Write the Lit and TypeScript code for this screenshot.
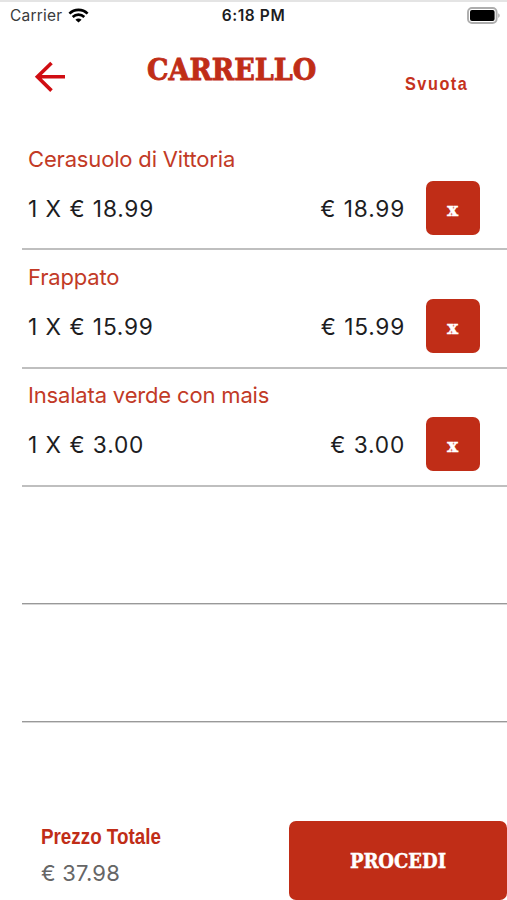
import { LitElement, html, css } from "lit";
import { customElement, property } from "lit/decorators.js";

interface CartItem {
  name: string;
  quantity: number;
  price: number;
}

const euro = (value: number) => `€ ${value.toFixed(2)}`;

@customElement("status-bar")
class StatusBar extends LitElement {
  static styles = css`
    :host {
      display: grid;
      grid-template-columns: 1fr auto 1fr;
      align-items: center;
      box-sizing: border-box;
      height: 30px;
      border-top: 2px solid #e4e4e4;
      padding: 0 7px 2px;
      font-size: 15.5px;
      color: #1c1c1e;
    }
    .left {
      display: flex;
      align-items: center;
      gap: 6px;
      margin-left: 3px;
      color: #3a3a3c;
      letter-spacing: 0.2px;
    }
    .time {
      font-weight: 600;
      letter-spacing: 0.6px;
    }
    .battery {
      justify-self: end;
    }
    svg {
      display: block;
    }
  `;

  render() {
    return html`
      <div class="left">
        <span>Carrier</span>
        <svg width="21" height="15" viewBox="0 0 21 15" fill="none" stroke="#000" stroke-width="2.6">
          <path d="M1.4 5.6C6.4 .6 14.6 .6 19.6 5.6"></path>
          <path d="M4.7 9C8 5.8 13 5.8 16.3 9"></path>
          <path d="M10.5 14.6L7.4 11.7C9.2 10.1 11.8 10.1 13.6 11.7Z" fill="#000" stroke="none"></path>
        </svg>
      </div>
      <div class="time">6:18 PM</div>
      <svg class="battery" width="33" height="17" viewBox="0 0 33 17">
        <rect x="1" y="1" width="28.6" height="15" rx="4" fill="#fff" stroke="#adadad" stroke-width="1.9"></rect>
        <rect x="3" y="3" width="24.6" height="11" rx="2" fill="#000"></rect>
        <path d="M31.2 6.2C33.2 7 33.2 10 31.2 10.8Z" fill="#adadad"></path>
      </svg>
    `;
  }
}

@customElement("cart-row")
class CartRow extends LitElement {
  @property({ attribute: false }) item?: CartItem;
  @property({ type: Boolean, reflect: true }) empty = false;

  static styles = css`
    :host {
      display: block;
      box-sizing: border-box;
      height: 118px;
      margin-left: 22px;
      padding: 13px 27px 0 6px;
      border-bottom: 2px solid #bfbfbf;
    }
    :host([empty]) {
      height: 117px;
      margin-bottom: 1px;
      border-bottom: 1px solid #999;
      box-shadow: 0 1px #d6d6d6;
    }
    .name {
      font-size: 22px;
      line-height: 28px;
      letter-spacing: -0.17px;
      color: #c23a26;
    }
    .line {
      display: flex;
      align-items: center;
      height: 54px;
      margin-top: 8px;
      font-size: 22.7px;
      line-height: 28px;
      letter-spacing: 0.78px;
      word-spacing: 0.4px;
      color: #1d1d1f;
    }
    .line span {
      padding-top: 2px;
    }
    .total {
      margin-left: auto;
      margin-right: 21px;
    }
    .remove {
      width: 54px;
      height: 54px;
      padding: 3px 1px 0 0;
      border: 0;
      border-radius: 7px;
      background: #c02d17;
      color: #fff;
      font: bold 18px "DejaVu Serif", serif;
      -webkit-text-stroke: 0.6px #fff;
    }
  `;

  render() {
    const item = this.item;
    if (!item) return null;
    return html`
      <div class="name">${item.name}</div>
      <div class="line">
        <span>${item.quantity} X ${euro(item.price)}</span>
        <span class="total">${euro(item.quantity * item.price)}</span>
        <button class="remove">x</button>
      </div>
    `;
  }
}

@customElement("app-root")
class AppRoot extends LitElement {
  static styles = css`
    :host {
      display: flex;
      flex-direction: column;
      width: 507px;
      height: 900px;
      overflow: hidden;
      background: #fff;
      font-family: Inter, "Liberation Sans", sans-serif;
    }
    header {
      display: grid;
      grid-template-columns: 147px 1fr 102px;
      height: 102px;
      flex: none;
      white-space: nowrap;
    }
    cart-row {
      flex: none;
    }
    cart-row:nth-of-type(2) {
      height: 119px;
    }
    cart-row:nth-of-type(3) {
      padding-top: 12px;
    }
    .back {
      margin: 31px 0 0 34px;
    }
    h1 {
      margin: 20px 0 0;
      font: bold 30px/40px "DejaVu Serif Condensed", "DejaVu Serif", serif;
      font-stretch: condensed;
      -webkit-text-stroke: 0.8px #c02d17;
      color: #c02d17;
    }
    .clear {
      margin-top: 42px;
      font: bold 19px/24px "Liberation Sans Narrow", "Liberation Sans", sans-serif;
      letter-spacing: 1.8px;
      color: #c5321d;
      transform: scaleX(0.855);
      transform-origin: left;
    }
    footer {
      display: flex;
      justify-content: space-between;
      margin-top: auto;
      height: 79.5px;
    }
    .sum {
      padding-left: 41px;
    }
    .label {
      margin-top: 1px;
      font: bold 22px/30px "Liberation Sans Narrow", "Liberation Sans", sans-serif;
      color: #c02d17;
      transform: scaleX(0.855);
      transform-origin: left;
    }
    .amount {
      margin-top: 7px;
      font-size: 22px;
      line-height: 28px;
      letter-spacing: 0.2px;
      color: #666;
    }
    .proceed {
      width: 218px;
      height: 79.5px;
      padding: 1px 0 0;
      border: 0;
      border-radius: 7px;
      background: #c02d17;
      color: #fff;
      font: bold 20px "DejaVu Serif Condensed", "DejaVu Serif", serif;
      font-stretch: condensed;
      -webkit-text-stroke: 0.4px #fff;
    }
  `;

  private items: CartItem[] = [
    { name: "Cerasuolo di Vittoria", quantity: 1, price: 18.99 },
    { name: "Frappato", quantity: 1, price: 15.99 },
    { name: "Insalata verde con mais", quantity: 1, price: 3 },
  ];

  render() {
    const rows = [...this.items, undefined, undefined];
    const sum = this.items.reduce((acc, i) => acc + i.quantity * i.price, 0);
    return html`
      <status-bar></status-bar>
      <header>
        <svg class="back" width="32" height="32" viewBox="0 0 32 32" fill="none" stroke="#d00d12" stroke-width="3.6">
          <path d="M17.5 2L3.4 15.8L17.5 29.6M3.4 15.8H31"></path>
        </svg>
        <h1>CARRELLO</h1>
        <div class="clear">Svuota</div>
      </header>
      ${rows.map((item) => html`<cart-row .item=${item} ?empty=${!item}></cart-row>`)}
      <footer>
        <div class="sum">
          <div class="label">Prezzo Totale</div>
          <div class="amount">${euro(sum)}</div>
        </div>
        <button class="proceed">PROCEDI</button>
      </footer>
    `;
  }
}
